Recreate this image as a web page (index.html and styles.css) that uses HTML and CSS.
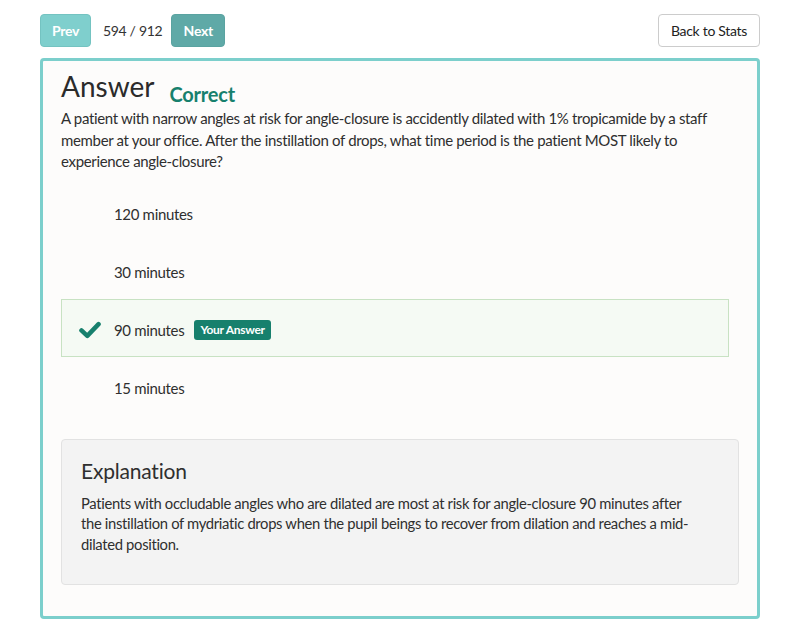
FILE: index.html
```html
<!DOCTYPE html>
<html>
<head>
<meta charset="utf-8">
<link rel="stylesheet" href="styles.css">
</head>
<body>
<div class="page">
  <div class="toolbar">
    <div class="nav">
      <button class="btn btn-prev">Prev</button>
      <span class="counter">594 / 912</span>
      <button class="btn btn-next">Next</button>
    </div>
    <button class="btn btn-back">Back to Stats</button>
  </div>
  <div class="card">
    <div class="title-row">
      <h1 class="title">Answer</h1>
      <span class="status">Correct</span>
    </div>
    <p class="question">A patient with narrow angles at risk for angle-closure is accidently dilated with 1% tropicamide by a staff member at your office. After the instillation of drops, what time period is the patient MOST likely to experience angle-closure?</p>
    <ul class="options">
      <li class="option"><span class="icon"></span><span class="label">120 minutes</span></li>
      <li class="option"><span class="icon"></span><span class="label">30 minutes</span></li>
      <li class="option option-correct"><span class="icon"><svg viewBox="0 0 24 20" width="22" height="18"><path d="M2.5 10.5 L9 16.5 L21.5 3.5" fill="none" stroke="#17806d" stroke-width="5" stroke-linecap="round" stroke-linejoin="round"/></svg></span><span class="label">90 minutes</span><span class="badge">Your Answer</span></li>
      <li class="option"><span class="icon"></span><span class="label">15 minutes</span></li>
    </ul>
    <div class="explanation">
      <h2 class="exp-title">Explanation</h2>
      <p class="exp-text">Patients with occludable angles who are dilated are most at risk for angle-closure 90 minutes after the instillation of mydriatic drops when the pupil beings to recover from dilation and reaches a mid-dilated position.</p>
    </div>
  </div>
</div>
</body>
</html>
```

FILE: styles.css
```css
* { box-sizing: border-box; }
html, body { margin: 0; padding: 0; background: #ffffff; }
body {
  font-family: "Lato", "Open Sans", sans-serif;
  color: #2f2f2f;
  font-size: 15px;
  letter-spacing: -0.33px;
}
.page {
  width: 720px;
  margin: 0 0 0 40px;
  padding-top: 14px;
}
.toolbar {
  display: flex;
  justify-content: space-between;
  align-items: center;
  height: 33px;
}
.nav {
  display: flex;
  align-items: center;
}
.btn {
  font-family: inherit;
  letter-spacing: -0.3px;
  height: 33px;
  border-radius: 4px;
  font-size: 14px;
  padding: 0 12px;
  cursor: pointer;
}
.btn-prev {
  background: #7fcfcd;
  border: 1px solid #74c3c1;
  color: #ffffff;
  font-weight: 700;
  width: 51px;
  padding: 0;
}
.btn-next {
  background: #5fa9a7;
  border: 1px solid #5aa3a1;
  color: #ffffff;
  font-weight: 700;
  width: 54px;
  padding: 0;
}
.counter {
  margin: 0 9px 0 12px;
  font-size: 14px;
  color: #333;
}
.btn-back {
  background: #ffffff;
  border: 1px solid #cccccc;
  color: #222;
  width: 102px;
  padding: 0;
}
.card {
  margin-top: 11px;
  border: 3px solid #7ccfcc;
  border-radius: 4px;
  background: #fdfcfb;
  padding: 8px 18px 31px 18px;
  height: 561px;
}
.title-row {
  display: flex;
  align-items: baseline;
}
.title {
  margin: 0;
  font-size: 28px;
  font-weight: 400;
  line-height: 34px;
  color: #2b2b2b;
  letter-spacing: 0;
}
.status {
  margin-left: 15px;
  font-size: 20px;
  font-weight: 700;
  color: #17806d;
  position: relative;
  top: 5px;
  letter-spacing: -0.2px;
}
.question {
  margin: 5px 0 0 0;
  line-height: 21.5px;
}
.options {
  list-style: none;
  margin: 12px 10px 0 0;
  padding: 0;
}
.option {
  display: flex;
  align-items: center;
  height: 58px;
  padding-left: 17px;
  border: 1px solid transparent;
}
.option-correct {
  background: #f5faf4;
  border-color: #c8e2c3;
  margin-top: -2px;
  margin-bottom: 2px;
  padding-top: 4px;
}
.icon {
  width: 22px;
  margin-right: 13px;
  display: flex;
  align-items: center;
}
.badge {
  margin-left: 10px;
  background: #17806d;
  color: #fff;
  font-size: 12px;
  font-weight: 700;
  padding: 2px 6px 3px 6px;
  border-radius: 3px;
  letter-spacing: -0.3px;
}
.explanation {
  margin-top: 22px;
  background: #f3f3f3;
  border: 1px solid #e2e2e2;
  border-radius: 4px;
  padding: 17px 19px 24px 19px;
  height: 146px;
}
.exp-title {
  margin: 0;
  font-size: 21px;
  font-weight: 400;
  line-height: 28px;
  color: #2f2f2f;
  letter-spacing: -0.2px;
}
.exp-text {
  margin: 8px 0 0 0;
  line-height: 20.8px;
  font-size: 14.8px;
  max-width: 615px;
}
```
